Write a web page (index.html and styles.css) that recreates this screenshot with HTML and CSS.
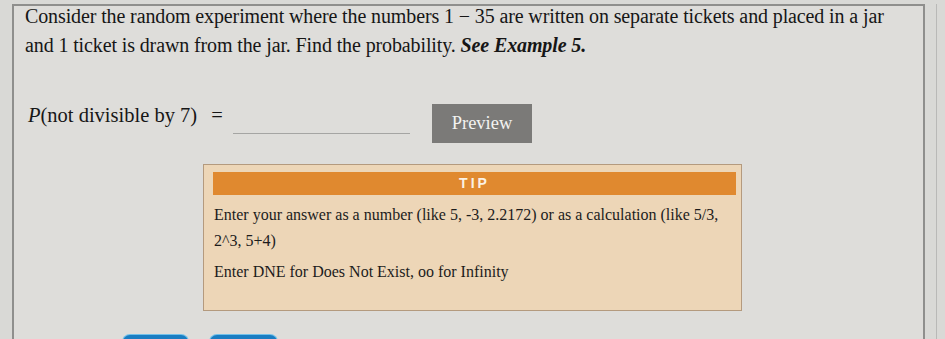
FILE: index.html
```html
<!DOCTYPE html>
<html>
<head>
<meta charset="utf-8">
<link rel="stylesheet" href="styles.css">
</head>
<body>
<div class="frame">
  <div class="panel">
    <p class="question">Consider the random experiment where the numbers 1 − 35 are written on separate tickets and placed in a jar<br>and 1 ticket is drawn from the jar. Find the probability. <b><i>See Example 5.</i></b></p>
    <div class="answer-row">
      <div class="label"><i>P</i>(not divisible by 7)<span class="eq">=</span></div>
      <div class="answer-input"></div>
      <button class="preview">Preview</button>
    </div>
    <div class="tip">
      <div class="tip-head">TIP</div>
      <div class="tip-body">
        <p class="tip-para">Enter your answer as a number (like 5, -3, 2.2172) or as a calculation (like 5/3,<br>2^3, 5+4)</p>
        <p class="tip-para second">Enter DNE for Does Not Exist, oo for Infinity</p>
      </div>
    </div>
    <div class="actions">
      <span class="blue-btn first"></span>
      <span class="blue-btn second"></span>
    </div>
  </div>
</div>
</body>
</html>
```
FILE: styles.css
```css
html, body {
  margin: 0;
  padding: 0;
  height: 100%;
  overflow: hidden;
}
body {
  background: #d9d9d6;
  font-family: "Liberation Serif", "Times New Roman", serif;
  color: #161616;
}
.frame {
  width: 937px;
  height: 339px;
  border-right: 1px solid #b9b9b7;
  box-sizing: border-box;
}
.panel {
  margin-left: 12px;
  margin-top: 4px;
  width: 913px;
  height: 400px;
  box-sizing: border-box;
  border-top: 2px solid #8f8f8d;
  border-left: 2px solid #8f8f8d;
  border-right: 2px solid #8f8f8d;
  background: #dedddA;
}
.question {
  margin: -4px 0 0 0;
  padding-left: 11px;
  font-size: 20px;
  line-height: 29px;
  letter-spacing: -0.12px;
  white-space: nowrap;
}
.answer-row {
  display: flex;
  align-items: flex-start;
  margin-top: 44px;
  height: 39px;
}
.label {
  width: 205px;
  margin-left: 14px;
  margin-top: -1px;
  font-size: 20.5px;
  line-height: 24px;
  white-space: nowrap;
}
.eq {
  margin-left: 14px;
}
.answer-input {
  width: 177px;
  height: 29px;
  border-bottom: 1px solid #a5a5a3;
}
.preview {
  margin-left: 22px;
  width: 100px;
  height: 39px;
  border: none;
  padding: 0;
  background: #7b7a78;
  color: #f3f3f1;
  font-family: "Liberation Serif", "Times New Roman", serif;
  font-size: 18.5px;
  line-height: 39px;
}
.tip {
  margin-top: 21px;
  margin-left: 189px;
  width: 539px;
  height: 147px;
  box-sizing: border-box;
  border: 1px solid #b49a7e;
  background: #edd6b7;
  padding: 7px 0 0 9px;
}
.tip-head {
  width: 523px;
  height: 23px;
  background: #e0892f;
  color: #fbf1e4;
  font-family: "Liberation Sans", Arial, sans-serif;
  font-weight: bold;
  font-size: 14px;
  letter-spacing: 3px;
  line-height: 23px;
  text-align: center;
}
.tip-body {
  margin-top: 7px;
  padding-left: 1px;
  font-size: 16px;
  line-height: 26px;
  color: #1c1c1c;
}
.tip-para {
  margin: 0;
  white-space: nowrap;
}
.tip-para.second {
  margin-top: 5px;
}
.actions {
  display: flex;
  gap: 22px;
  margin-top: 24px;
  margin-left: 109px;
}
.blue-btn {
  display: block;
  height: 20px;
  border-radius: 7px 7px 0 0;
  background: #1a7dc2;
  box-shadow: 0 0 0 1px #6fc0ea;
}
.blue-btn.first {
  width: 65px;
}
.blue-btn.second {
  width: 67px;
}
```
